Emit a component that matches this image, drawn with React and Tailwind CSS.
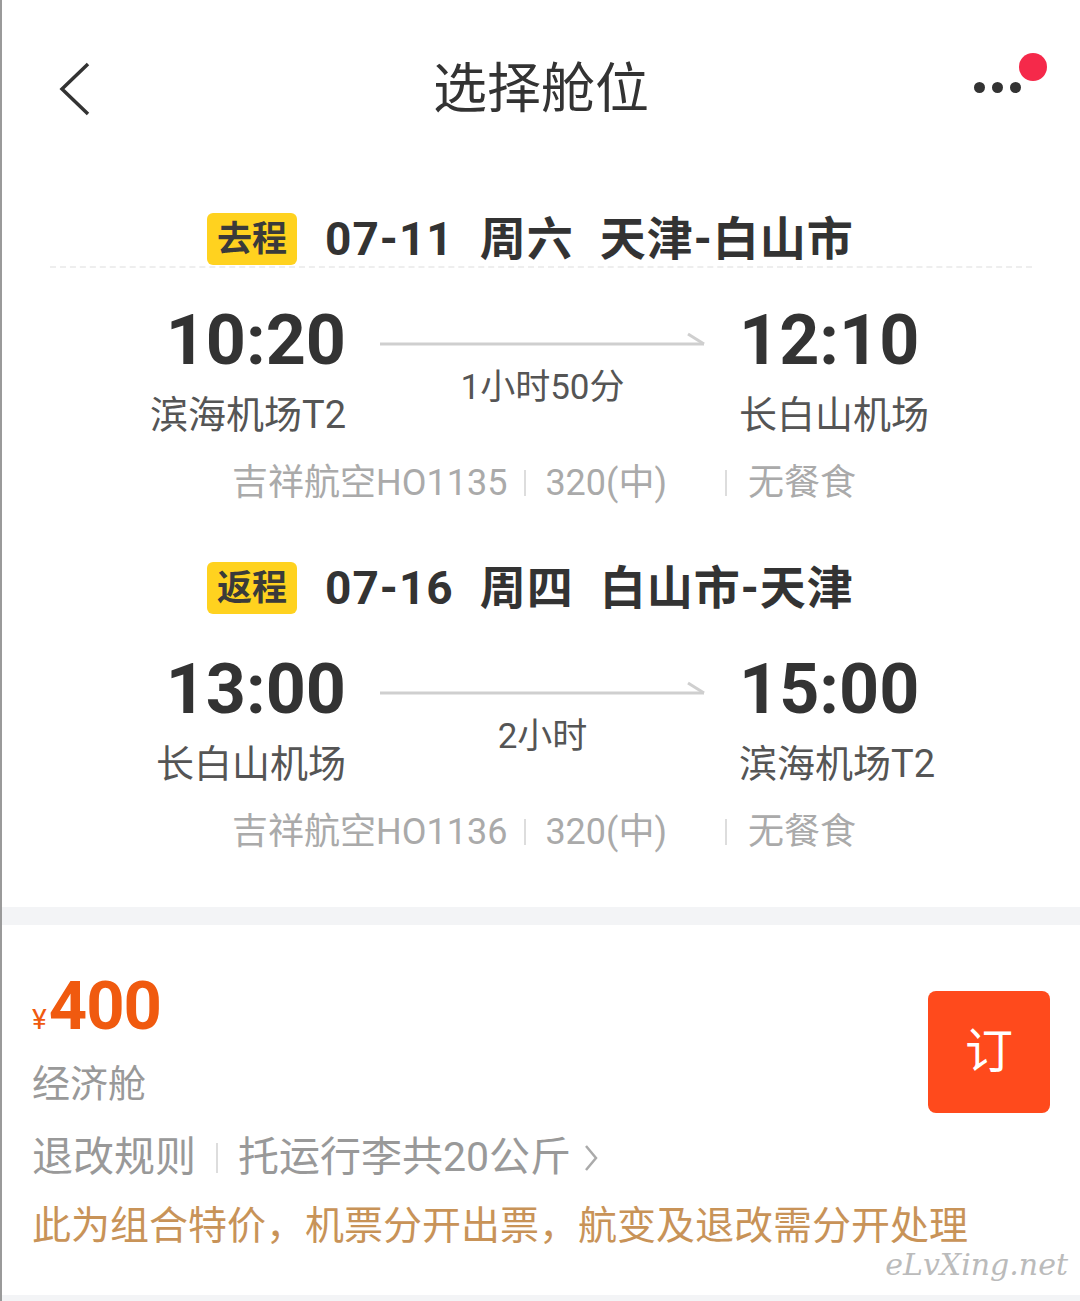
import React from 'react'

const font = { fontFamily: 'Roboto, "Noto Sans CJK SC", sans-serif' }

function Leg({ tag, date, week, route, dep, arr, depPort, arrPort, dur, flight }) {
    return (
        <div>
            {/* leg header */}
            <div className="flex items-center pl-[205px] h-[52px]">
                <span className="bg-[#ffd21f] rounded-[6px] w-[90px] h-[52px] flex items-center justify-center text-[35px] font-bold text-[#3a3a3a] leading-none">
                    {tag}
                </span>
                <div className="flex items-center gap-[26px] ml-[28px] text-[46px] font-bold text-[#333] leading-none tracking-[1px]">
                    <span>{date}</span>
                    <span>{week}</span>
                    <span>{route}</span>
                </div>
            </div>

            {/* times */}
            <div className="grid grid-cols-[344px_393px_1fr] mt-[37px]">
                <div className="flex flex-col items-end">
                    <span className="text-[70px] font-bold text-[#333] leading-[76px]">{dep}</span>
                    <span className="text-[38px] text-[#555] leading-[44px] mt-[15px]">{depPort}</span>
                </div>
                <div className="flex flex-col items-center pt-[30px]">
                    <svg width="330" height="16" viewBox="0 0 330 16">
                        <line x1="2" y1="12" x2="326" y2="12" stroke="#cfcfcf" strokeWidth="3" />
                        <line x1="310" y1="2" x2="326" y2="12" stroke="#cfcfcf" strokeWidth="3" />
                    </svg>
                    <span className="text-[35px] text-[#555] leading-none mt-[22px]">{dur}</span>
                </div>
                <div className="flex flex-col items-start">
                    <span className="text-[70px] font-bold text-[#333] leading-[76px]">{arr}</span>
                    <span className="text-[38px] text-[#555] leading-[44px] mt-[15px]">{arrPort}</span>
                </div>
            </div>

            {/* flight info */}
            <div className="flex items-center text-[36px] text-[#aaa] leading-none mt-[28px] pl-[230px]">
                <span>{flight}</span>
                <span className="w-[2px] h-[26px] bg-[#ddd] ml-[17px] mr-[19px]" />
                <span>320(中)</span>
                <span className="w-[2px] h-[26px] bg-[#ddd] ml-[58px] mr-[21px]" />
                <span>无餐食</span>
            </div>
        </div>
    )
}

function App() {
    return (
        <div className="w-[1080px] h-[1301px] bg-white border-l-2 border-[#9a9a9a] overflow-hidden relative" style={font}>
            {/* nav bar */}
            <div className="relative h-[180px] flex items-center justify-center">
                <svg className="absolute left-[56px] top-[62px]" width="34" height="54" viewBox="0 0 34 54">
                    <polyline points="30,2 4,27 30,52" fill="none" stroke="#333" strokeWidth="3.5" strokeLinejoin="miter" />
                </svg>
                <span className="text-[54px] text-[#333] leading-none">选择舱位</span>
                <div className="absolute left-[972px] top-[82px] flex gap-[7px]">
                    <span className="w-[11px] h-[11px] rounded-full bg-[#333]" />
                    <span className="w-[11px] h-[11px] rounded-full bg-[#333]" />
                    <span className="w-[11px] h-[11px] rounded-full bg-[#333]" />
                </div>
                <span className="absolute left-[1017px] top-[53px] w-[28px] h-[28px] rounded-full bg-[#f5294a]" />
            </div>

            <div className="mt-[33px]">
                <Leg tag="去程" date="07-11" week="周六" route="天津-白山市" dep="10:20" arr="12:10"
                    depPort="滨海机场T2" arrPort="长白山机场" dur="1小时50分" flight="吉祥航空HO1135" />
            </div>
            <div className="absolute left-[48px] right-[48px] top-[266px] border-t-2 border-dashed border-[#eee]" />

            <div className="mt-[61px]">
                <Leg tag="返程" date="07-16" week="周四" route="白山市-天津" dep="13:00" arr="15:00"
                    depPort="长白山机场" arrPort="滨海机场T2" dur="2小时" flight="吉祥航空HO1136" />
            </div>

            <div className="h-[18px] bg-[#f3f4f6] mt-[57px]" />

            {/* cabin */}
            <div className="flex justify-between pl-[30px] pr-[30px] pt-[48px]">
                <div>
                    <div className="flex items-end text-[#f05a0f] leading-none">
                        <span className="text-[28px] mb-[6px] mr-[2px]">¥</span>
                        <span className="text-[67px] font-bold tracking-[-1px]">400</span>
                    </div>
                    <div className="text-[38px] text-[#999] leading-none mt-[25px]">经济舱</div>
                </div>
                <button className="w-[122px] h-[122px] bg-[#ff4a1c] rounded-[8px] text-white text-[48px] mt-[18px] leading-none">订</button>
            </div>

            <div className="flex items-center text-[41px] text-[#999] leading-none pl-[30px] mt-[24px]">
                <span>退改规则</span>
                <span className="w-[2px] h-[30px] bg-[#ddd] mx-[20px]" />
                <span>托运行李共20公斤</span>
                <svg className="ml-[12px]" width="16" height="30" viewBox="0 0 16 30">
                    <polyline points="3,3 13,15 3,27" fill="none" stroke="#aaa" strokeWidth="2.5" />
                </svg>
            </div>

            <div className="text-[39px] text-[#c89358] leading-none pl-[30px] mt-[29px]">
                此为组合特价，机票分开出票，航变及退改需分开处理
            </div>

            <span className="absolute right-[12px] top-[1250px] text-[30px] italic text-[#bbb] leading-none" style={{ fontFamily: '"DejaVu Serif", serif' }}>
                eLvXing.net
            </span>
            <div className="absolute left-0 right-0 bottom-0 h-[6px] bg-[#f3f4f6]" />
        </div>
    )
}

export default App
